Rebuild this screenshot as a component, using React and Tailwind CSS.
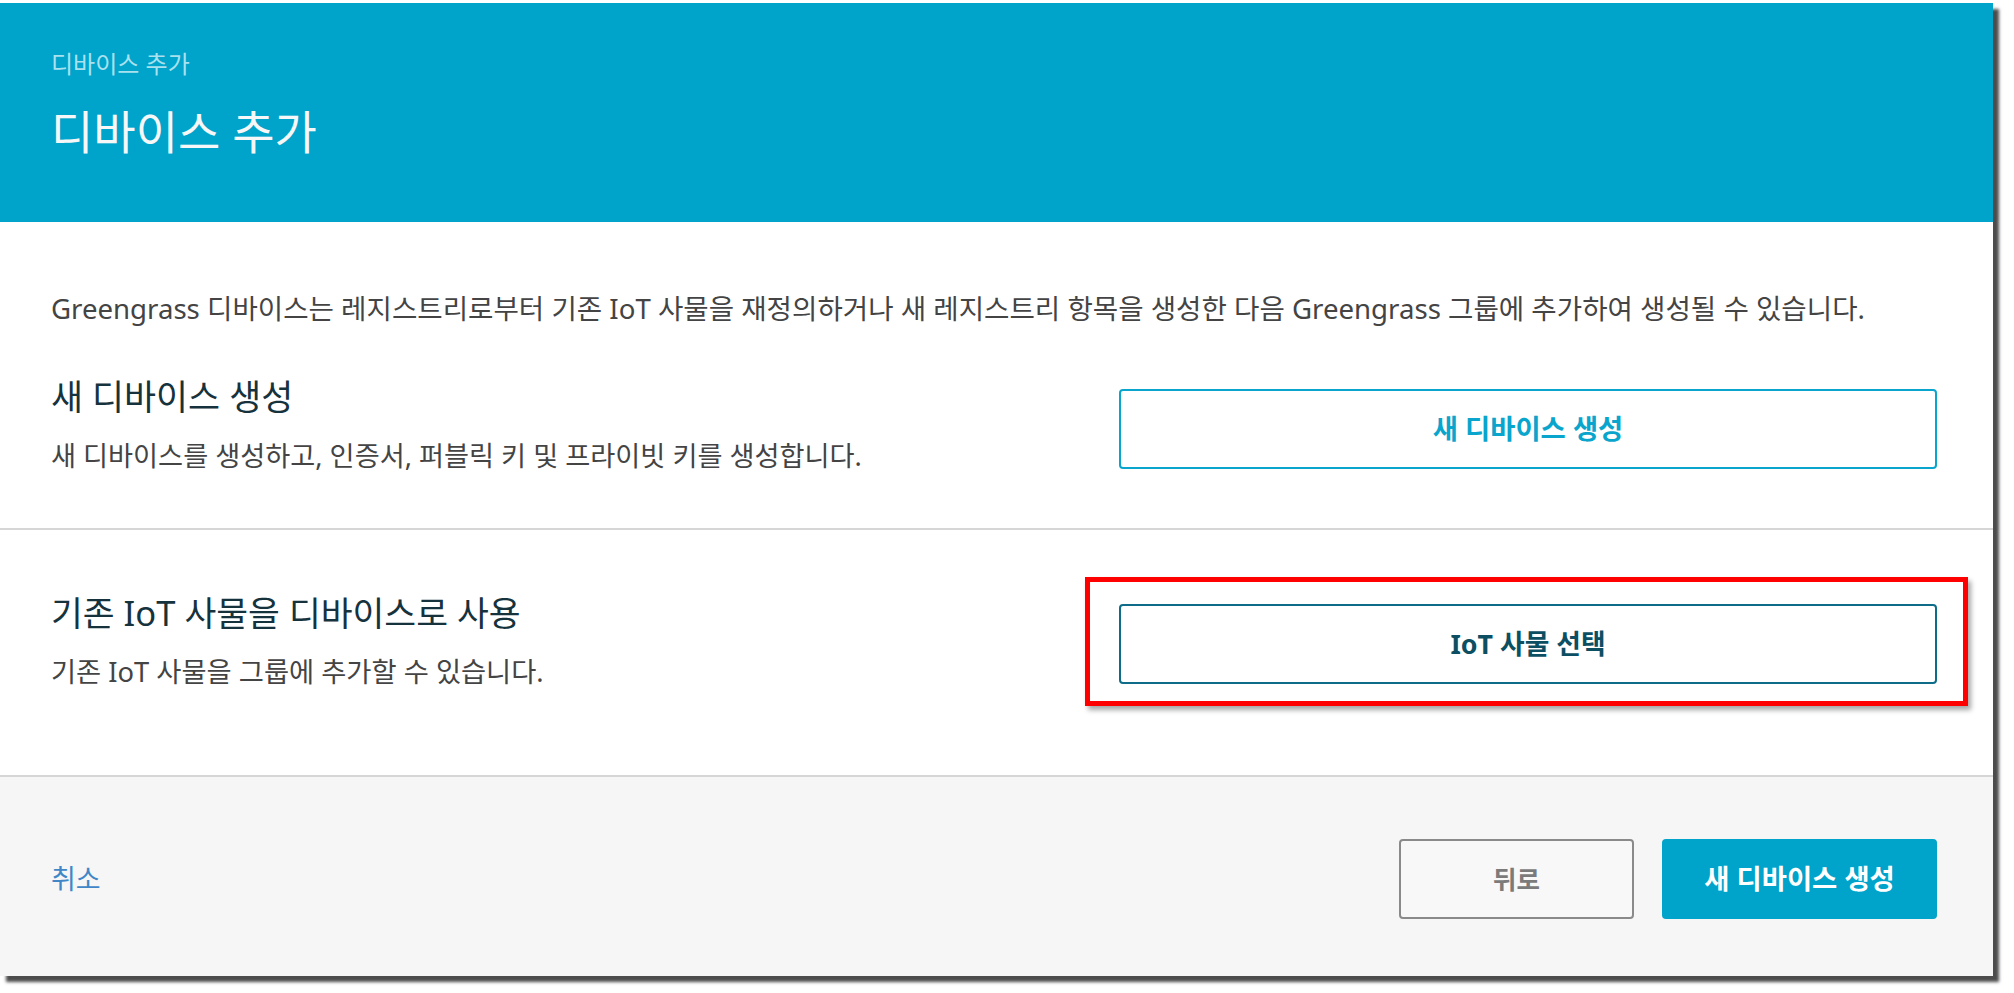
import React from "react";

export default function App() {
  return (
    <div className="w-[2014px] h-[993px] bg-white pt-[3px] font-['Noto_Sans','Noto_Sans_CJK_KR',sans-serif]">
      <div className="w-[1993px] h-[973px] bg-white flex flex-col shadow-[6px_6px_3px_rgba(0,0,0,0.7)]">
        {/* Header */}
        <div className="h-[219px] bg-[#00a3ca] px-[51px] pt-[46px] flex flex-col">
          <div className="text-[24px] leading-[30px] text-[#a9e1ef]">디바이스 추가</div>
          <div className="mt-[24px] text-[46px] leading-[56px] text-[#f7f7f7]">디바이스 추가</div>
        </div>

        {/* Section 1 */}
        <div className="h-[308px] border-b-2 border-[#d6d6d6] pl-[51px] pr-[56px] pt-[68px]">
          <p className="text-[27.6px] leading-[36px] text-[#444444] whitespace-nowrap">
            Greengrass 디바이스는 레지스트리로부터 기존 IoT 사물을 재정의하거나 새 레지스트리 항목을 생성한 다음 Greengrass 그룹에 추가하여 생성될 수 있습니다.
          </p>
          <div className="mt-[49px] flex items-start justify-between">
            <div className="flex flex-col gap-[19px]">
              <h2 className="text-[34.8px] leading-[44px] text-[#16323d]">새 디바이스 생성</h2>
              <p className="text-[27.2px] leading-[36px] text-[#444444]">
                새 디바이스를 생성하고, 인증서, 퍼블릭 키 및 프라이빗 키를 생성합니다.
              </p>
            </div>
            <button className="mt-[14px] w-[818px] h-[80px] rounded-[4px] border-2 border-[#0aa5cc] bg-white text-[27.4px] font-bold text-[#0aa5cc]">
              새 디바이스 생성
            </button>
          </div>
        </div>

        {/* Section 2 */}
        <div className="h-[247px] border-b-2 border-[#d6d6d6] pl-[51px] pr-[56px] pt-[61px]">
          <div className="flex items-start justify-between">
            <div className="flex flex-col gap-[19px]">
              <h2 className="text-[34.6px] leading-[44px] text-[#16323d]">기존 IoT 사물을 디바이스로 사용</h2>
              <p className="text-[27.3px] leading-[36px] text-[#444444]">기존 IoT 사물을 그룹에 추가할 수 있습니다.</p>
            </div>
            <div className="relative mt-[13px]">
              <div className="absolute left-[-34px] right-[-31px] top-[-27px] bottom-[-22px] border-[5px] border-[#ff0000] shadow-[3px_4px_5px_rgba(0,0,0,0.35)]" />
              <button className="relative w-[818px] h-[80px] rounded-[4px] border-2 border-[#0f6c88] bg-white text-[26.8px] font-bold text-[#0c4f63]">
                IoT 사물 선택
              </button>
            </div>
          </div>
        </div>

        {/* Footer */}
        <div className="flex-1 bg-[#f6f6f6] pl-[51px] pr-[56px] pt-[62px] flex items-start justify-between">
          <a className="mt-[24px] text-[27px] leading-[32px] text-[#4187c7]">취소</a>
          <div className="flex gap-[28px]">
            <button className="w-[235px] h-[80px] rounded-[4px] border-2 border-[#8a8a8a] bg-[#f8f8f8] text-[25.5px] font-bold text-[#7b7b7b]">
              뒤로
            </button>
            <button className="w-[275px] h-[80px] rounded-[4px] bg-[#00a3ca] text-[27.4px] font-bold text-white">
              새 디바이스 생성
            </button>
          </div>
        </div>
      </div>
    </div>
  );
}
